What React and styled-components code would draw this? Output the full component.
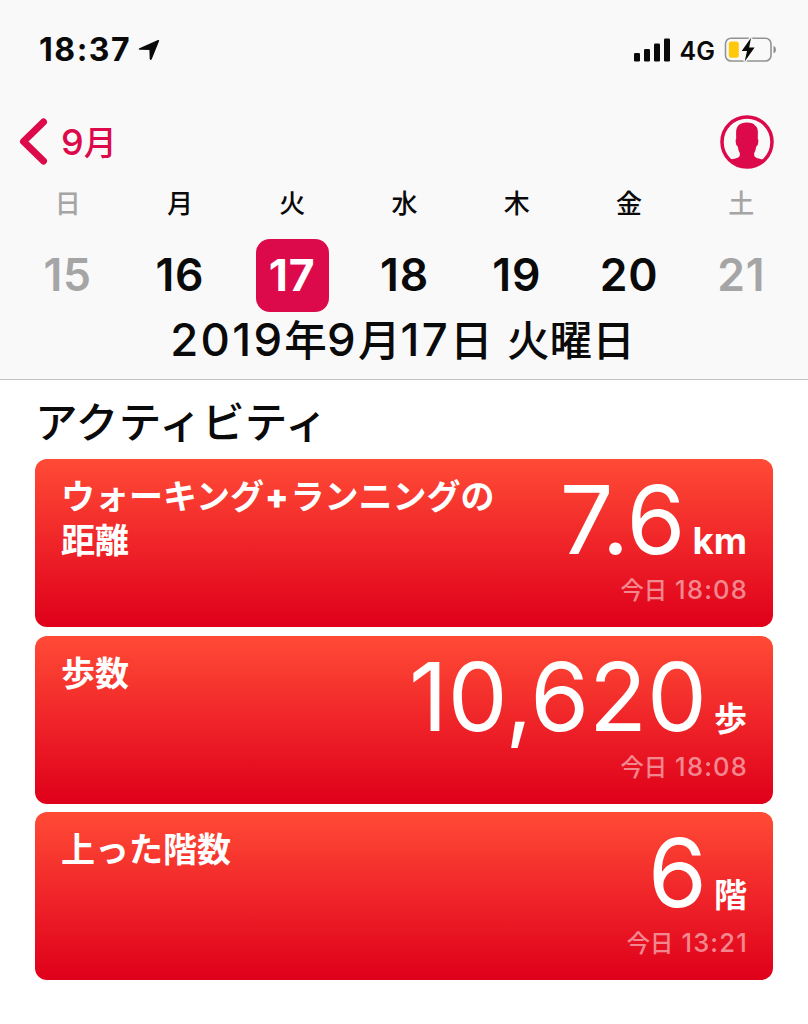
import React from "react";
import styled, { createGlobalStyle } from "styled-components";

const ACCENT = "#dc0a4b";
const MUTED = "#a5a5a5";
const TEXT = "#0a0a0a";

const GlobalStyle = createGlobalStyle`
  * {
    box-sizing: border-box;
  }
  body {
    margin: 0;
    background: #ffffff;
    color: ${TEXT};
    font-family: Inter, "Noto Sans CJK JP", sans-serif;
  }
`;

const Screen = styled.div`
  width: 808px;
  height: 1024px;
  overflow: hidden;
`;

const Header = styled.header`
  height: 380px;
  background: #f9f9f9;
  border-bottom: 1px solid #c4c4c6;
`;

const StatusBar = styled.div`
  display: flex;
  align-items: center;
  height: 100px;
  padding: 0 31px 0 39px;
`;

const Clock = styled.span`
  font-size: 32px;
  font-weight: 750;
  line-height: 40px;
  letter-spacing: 1.5px;
`;

const LocationIcon = styled.svg`
  margin-left: 7px;
`;

const StatusRight = styled.div`
  display: flex;
  align-items: center;
  margin-left: auto;
`;

const Network = styled.span`
  margin: 2px 9px 0 9px;
  font-size: 25px;
  font-weight: 600;
  line-height: 30px;
`;

const NavBar = styled.nav`
  display: flex;
  align-items: center;
  justify-content: space-between;
  height: 84px;
  padding: 0 34px 0 18px;
`;

/* Kanji set next to latin digits, drawn a little smaller than them */
const Kanji = styled.span`
  font-size: ${({ $size }) => $size}px;
  letter-spacing: 0;
`;

const BackLink = styled.a`
  display: flex;
  align-items: center;
  gap: 11px;
  color: ${ACCENT};
  font-size: 36px;
  font-weight: 500;
  line-height: 48px;
`;

const Week = styled.div`
  display: grid;
  grid-template-columns: repeat(7, 1fr);
  padding: 0 10.5px 0 11.5px;
`;

const Day = styled.div`
  display: flex;
  flex-direction: column;
  align-items: center;
  color: ${({ $weekend }) => ($weekend ? MUTED : TEXT)};
`;

const DayName = styled.span`
  height: 54.5px;
  font-size: 26px;
  font-weight: 500;
  line-height: 40px;
`;

const DayNumber = styled.span`
  width: 73px;
  height: 73px;
  border-radius: 14px;
  background: ${({ $selected }) => ($selected ? ACCENT : "transparent")};
  color: ${({ $selected }) => ($selected ? "#ffffff" : "inherit")};
  font-size: 44.5px;
  font-weight: ${({ $selected }) => ($selected ? 700 : 600)};
  line-height: 72px;
  letter-spacing: 0.8px;
  text-align: center;
`;

const FullDate = styled.h1`
  margin: 0 3px 0 0;
  font-size: 45.5px;
  font-weight: 500;
  line-height: 56px;
  letter-spacing: 2.3px;
  text-align: center;
  white-space: nowrap;
`;

const Main = styled.main`
  padding: 0 35px;
`;

const SectionTitle = styled.h2`
  margin: 0;
  height: 79px;
  font-size: 42.6px;
  font-weight: 500;
  line-height: 85px;
  letter-spacing: 0.3px;
`;

const CardList = styled.div`
  display: flex;
  flex-direction: column;
  gap: 8.7px;
`;

const Card = styled.article`
  display: flex;
  justify-content: space-between;
  height: 168px;
  padding: 16px 26px 0;
  border-radius: 12px;
  background: linear-gradient(#ff4b36, #ec1d26 60%, #df001a);
  color: #ffffff;
`;

const CardLabel = styled.h3`
  width: 450px;
  margin: 0;
  font-size: 34px;
  font-weight: 600;
  line-height: 44px;
  white-space: nowrap;
`;

const Plus = styled.span`
  margin: 0 2px 0 1px;
  font-weight: 900;
`;

const Reading = styled.div`
  display: flex;
  flex-direction: column;
  align-items: flex-end;
  white-space: nowrap;
`;

const Amount = styled.div`
  display: flex;
  align-items: baseline;
  height: 95px;
  line-height: 90px;
`;

const Value = styled.span`
  font-size: 95px;
  font-weight: 400;
`;

const Unit = styled.span`
  margin-left: 7px;
  font-size: ${({ $latin }) => ($latin ? 36.5 : 33)}px;
  font-weight: ${({ $latin }) => ($latin ? 700 : 600)};
  line-height: 40px;
`;

const Timestamp = styled.time`
  color: rgba(255, 255, 255, 0.5);
  font-size: 25.5px;
  font-weight: 500;
  line-height: 40px;
  letter-spacing: 1.2px;
  margin-right: -1px;
`;

const days = [
  { name: "日", number: 15, weekend: true },
  { name: "月", number: 16 },
  { name: "火", number: 17, selected: true },
  { name: "水", number: 18 },
  { name: "木", number: 19 },
  { name: "金", number: 20 },
  { name: "土", number: 21, weekend: true }
];

const activities = [
  {
    id: "distance",
    label: (
      <>
        ウォーキング<Plus>+</Plus>ランニングの
        <br />
        距離
      </>
    ),
    value: "7.6",
    unit: "km",
    latin: true,
    time: "18:08"
  },
  { id: "steps", label: "歩数", value: "10,620", unit: "歩", time: "18:08" },
  { id: "floors", label: "上った階数", value: "6", unit: "階", time: "13:21" }
];

const SignalIcon = () => (
  <svg width="37" height="24" viewBox="0 0 37 24" fill={TEXT}>
    <rect x="0" y="15" width="6" height="8.5" rx="1.3" />
    <rect x="10" y="11" width="6" height="12.5" rx="1.3" />
    <rect x="20" y="5.5" width="6" height="18" rx="1.3" />
    <rect x="30" y="0.5" width="6" height="23" rx="1.3" />
  </svg>
);

const BatteryIcon = () => (
  <svg width="53" height="28" viewBox="0 0 53 28">
    <rect
      x="1.5"
      y="2.2"
      width="45.5"
      height="22.8"
      rx="5.5"
      fill="none"
      stroke="#929292"
      strokeWidth="1.6"
    />
    <path d="M49.5 9.8 Q52 10.8 52 13.7 Q52 16.6 49.5 17.6 Z" fill="#8e8e8e" />
    <rect x="4.8" y="5.5" width="10" height="16.3" rx="2.5" fill="#ffc80a" />
    <path
      d="M27 1.7 L17.7 15 H23 L20.7 25.4 L30.6 11.4 H25.2 Z"
      fill={TEXT}
      stroke="#f9f9f9"
      strokeWidth="3"
      paintOrder="stroke"
    />
  </svg>
);

const ProfileIcon = () => (
  <svg width="54" height="54" viewBox="0 0 54 54">
    <circle cx="27" cy="27" r="25" fill="none" stroke={ACCENT} strokeWidth="3.5" />
    <path
      d="M27 7.6 C20 7.4 16 11 16.1 18 L16.2 24 C15.3 24.4 15.6 27 16.2 29.4 C16.6 30.6 17.1 31 17.7 31.2 C18.1 34 18.8 36.3 19.8 38 V40.5 C19 43.4 14.5 43.4 9 45.2 C14 49.8 20 52.6 27 52.6 C34 52.6 40 49.8 45 45.2 C39.5 43.4 35 43.4 34.2 40.5 V38 C35.2 36.3 35.9 34 36.3 31.2 C36.9 31 37.4 30.6 37.8 29.4 C38.4 27 38.7 24.4 37.8 24 L37.9 17 C37.9 13.5 36.7 11.3 35 10.4 C33.6 8.5 31 7.6 27 7.6 Z"
      fill={ACCENT}
    />
  </svg>
);

const ActivityCard = ({ label, value, unit, latin, time }) => (
  <Card>
    <CardLabel>{label}</CardLabel>
    <Reading>
      <Amount>
        <Value>{value}</Value>
        <Unit $latin={latin}>{unit}</Unit>
      </Amount>
      <Timestamp>
        <Kanji $size={23.3}>今日</Kanji> {time}
      </Timestamp>
    </Reading>
  </Card>
);

export default function App() {
  return (
    <Screen>
      <GlobalStyle />
      <Header>
        <StatusBar>
          <Clock>18:37</Clock>
          <LocationIcon width="22" height="22" viewBox="0 0 22 22">
            <path
              d="M1.4 9.2 L20 1 Q21.6 0.6 21 2.2 L13.8 20 Q12.6 21.8 11.7 20 L11.4 10.9 L1.8 10.8 Q-0.2 10.2 1.4 9.2 Z"
              fill={TEXT}
            />
          </LocationIcon>
          <StatusRight>
            <SignalIcon />
            <Network>4G</Network>
            <BatteryIcon />
          </StatusRight>
        </StatusBar>
        <NavBar>
          <BackLink>
            <svg width="32" height="48" viewBox="0 0 32 48">
              <path
                d="M25.5 4 L5.5 23.5 L25.5 43"
                fill="none"
                stroke={ACCENT}
                strokeWidth="7"
                strokeLinecap="round"
                strokeLinejoin="round"
              />
            </svg>
            <span>
              9<Kanji $size={33}>月</Kanji>
            </span>
          </BackLink>
          <ProfileIcon />
        </NavBar>
        <Week>
          {days.map(({ name, number, weekend, selected }) => (
            <Day key={number} $weekend={weekend}>
              <DayName>{name}</DayName>
              <DayNumber $selected={selected}>{number}</DayNumber>
            </Day>
          ))}
        </Week>
        <FullDate>
          2019<Kanji $size={42.6}>年</Kanji>9<Kanji $size={42.6}>月</Kanji>17
          <Kanji $size={42.6}>日</Kanji> <Kanji $size={42.6}>火曜日</Kanji>
        </FullDate>
      </Header>
      <Main>
        <SectionTitle>アクティビティ</SectionTitle>
        <CardList>
          {activities.map(({ id, ...activity }) => (
            <ActivityCard key={id} {...activity} />
          ))}
        </CardList>
      </Main>
    </Screen>
  );
}
